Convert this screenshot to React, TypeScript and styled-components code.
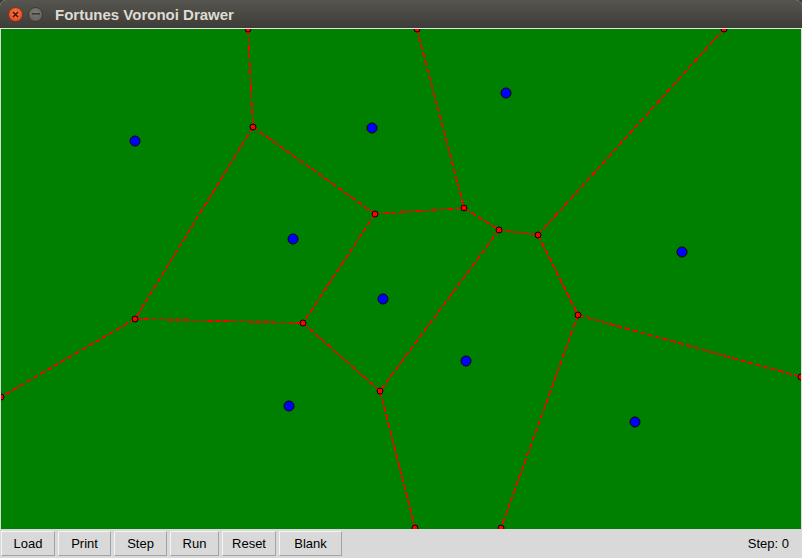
import React from "react";
import styled, { createGlobalStyle } from "styled-components";

const GlobalStyle = createGlobalStyle`
  html, body {
    margin: 0;
    padding: 0;
    width: 802px;
    height: 558px;
    overflow: hidden;
    background: #3c3b37;
  }
`;

const Window = styled.div`
  width: 802px;
  height: 558px;
  display: flex;
  flex-direction: column;
  background: #d9d9d9;
  border-radius: 6px 6px 0 0;
  overflow: hidden;
`;

const TitleBar = styled.div`
  height: 28px;
  flex: none;
  display: flex;
  align-items: center;
  padding-left: 8px;
  gap: 5px;
  background: linear-gradient(#57554f, #3d3c38);
  border-bottom: 1px solid #e6e4df;
  box-sizing: content-box;
`;

const WinButton = styled.div<{ $kind: "close" | "min" }>`
  width: 15px;
  height: 15px;
  border-radius: 50%;
  box-sizing: border-box;
  display: flex;
  align-items: center;
  justify-content: center;
  border: 1px solid ${(p) => (p.$kind === "close" ? "#8e2e12" : "#3a3935")};
  background: ${(p) =>
    p.$kind === "close"
      ? "radial-gradient(circle at 50% 35%, #f6734a, #e0461a)"
      : "radial-gradient(circle at 50% 35%, #7b7a75, #5d5c57)"};
`;

const Title = styled.div`
  margin-left: 7px;
  font-family: "Liberation Sans", Arial, sans-serif;
  font-weight: bold;
  font-size: 15px;
  color: #dfdbd2;
  padding-top: 1px;
`;

const Body = styled.div`
  flex: 1;
  display: flex;
  padding: 0 1px;
`;

const Canvas = styled.div`
  flex: 1;
  height: 500px;
  background: #008000;
`;

const Toolbar = styled.div`
  height: 29px;
  flex: none;
  display: flex;
  align-items: flex-start;
  padding: 2px 0 0 1px;
  box-sizing: border-box;
  gap: 3px;
  font-family: "Liberation Sans", Arial, sans-serif;
  font-size: 13px;
  color: #000;
`;

const Button = styled.button<{ $w: number }>`
  width: ${(p) => p.$w}px;
  height: 25px;
  padding: 0;
  margin: 0;
  background: #d9d9d9;
  font: inherit;
  color: #000;
  border-style: solid;
  border-width: 1px;
  border-color: #f4f4f4 #a3a3a3 #a3a3a3 #f4f4f4;
  cursor: default;
`;

const StepLabel = styled.div`
  margin-left: auto;
  margin-right: 13px;
  padding-top: 5px;
`;

type Pt = [number, number];

const vertices: Pt[] = [
  [248, 29], [253, 127], [417, 29], [724, 29], [375, 214], [464, 208],
  [499, 230], [538, 235], [578, 315], [135, 319], [303, 323], [380, 391],
  [1, 397], [801, 377], [415, 528], [501, 528],
];

const sites: Pt[] = [
  [135, 141], [372, 128], [506, 93], [293, 239], [383, 299],
  [682, 252], [466, 361], [289, 406], [635, 422],
];

const edges: [Pt, Pt][] = [
  [[248, 29], [253, 127]],
  [[253, 127], [375, 214]],
  [[253, 127], [135, 319]],
  [[417, 29], [464, 208]],
  [[375, 214], [464, 208]],
  [[375, 214], [303, 323]],
  [[464, 208], [499, 230]],
  [[499, 230], [538, 235]],
  [[499, 230], [380, 391]],
  [[538, 235], [724, 29]],
  [[538, 235], [578, 315]],
  [[578, 315], [801, 377]],
  [[578, 315], [501, 528]],
  [[135, 319], [1, 397]],
  [[135, 319], [303, 323]],
  [[303, 323], [380, 391]],
  [[380, 391], [415, 528]],
];

// canvas starts at (1, 29) in window coordinates
const OX = 1;
const OY = 29;

function Diagram() {
  return (
    <svg width="800" height="500" viewBox={`${OX} ${OY} 800 500`}>
      {edges.map(([a, b], i) => (
        <line
          key={i}
          x1={a[0]}
          y1={a[1]}
          x2={b[0]}
          y2={b[1]}
          stroke="#ff0000"
          strokeWidth={1.6}
          strokeDasharray="6 2"
          shapeRendering="crispEdges"
        />
      ))}
      {vertices.map(([x, y], i) => (
        <circle key={i} cx={x} cy={y} r={3} fill="#ff0000" stroke="#000" strokeWidth={1} />
      ))}
      {sites.map(([x, y], i) => (
        <circle key={i} cx={x} cy={y} r={5} fill="#0000ff" stroke="#000" strokeWidth={1} />
      ))}
    </svg>
  );
}

export default function App() {
  return (
    <Window>
      <GlobalStyle />
      <TitleBar>
        <WinButton $kind="close">
          <svg width="7" height="7" viewBox="0 0 7 7">
            <path d="M1 1L6 6M6 1L1 6" stroke="#3b1206" strokeWidth="1.4" />
          </svg>
        </WinButton>
        <WinButton $kind="min">
          <svg width="8" height="2" viewBox="0 0 8 2">
            <rect x="0" y="0" width="8" height="1.6" fill="#3a3935" />
          </svg>
        </WinButton>
        <Title>Fortunes Voronoi Drawer</Title>
      </TitleBar>
      <Body>
        <Canvas>
          <Diagram />
        </Canvas>
      </Body>
      <Toolbar>
        <Button $w={54}>Load</Button>
        <Button $w={53}>Print</Button>
        <Button $w={53}>Step</Button>
        <Button $w={49}>Run</Button>
        <Button $w={54}>Reset</Button>
        <Button $w={63}>Blank</Button>
        <StepLabel>Step: 0</StepLabel>
      </Toolbar>
    </Window>
  );
}
